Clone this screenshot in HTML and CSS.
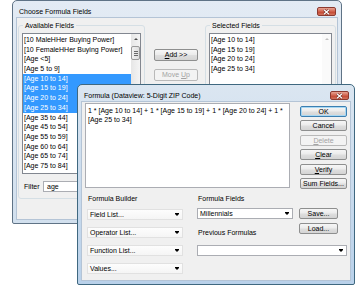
FILE: index.html
```html
<!DOCTYPE html>
<html lang="en">
<head>
    <meta charset="UTF-8">
    <title>Choose Formula Fields</title>
    <link rel="stylesheet" href="styles.css">
</head>
<body>
    <div class="desktop">
        <!-- back dialog -->
        <div class="window fields-window">
            <div class="titlebar">
                <span class="title">Choose Formula Fields</span>
                <span class="close-btn">
                    <svg width="9" height="6" viewBox="0 0 9 6"><path d="M2 0.8 L7 5.2 M7 0.8 L2 5.2" stroke="#6b2a22" stroke-width="2.4"/><path d="M2 0.8 L7 5.2 M7 0.8 L2 5.2" stroke="#fff" stroke-width="1.3"/></svg>
                </span>
            </div>
            <div class="client fields-client">
                <div class="group avail-group">
                    <span class="group-label">Available Fields</span>
                    <div class="listbox avail-list">
                        <div class="items">
                            <div class="item">[10 MaleHHer Buying Power]</div>
                            <div class="item">[10 FemaleHHer Buying Power]</div>
                            <div class="item">[Age &lt;5]</div>
                            <div class="item">[Age 5 to 9]</div>
                            <div class="item selected">[Age 10 to 14]</div>
                            <div class="item selected">[Age 15 to 19]</div>
                            <div class="item selected">[Age 20 to 24]</div>
                            <div class="item selected">[Age 25 to 34]</div>
                            <div class="item">[Age 35 to 44]</div>
                            <div class="item">[Age 45 to 54]</div>
                            <div class="item">[Age 55 to 59]</div>
                            <div class="item">[Age 60 to 64]</div>
                            <div class="item">[Age 65 to 74]</div>
                            <div class="item">[Age 75 to 84]</div>
                            <div class="item">[Age 85+]</div>
                        </div>
                        <div class="vscroll">
                            <div class="arrow-btn"><span class="arrow-up"></span></div>
                            <div class="thumb"><span class="grip"></span></div>
                        </div>
                    </div>
                    <div class="filter-row">
                        <span class="filter-label">Filter</span>
                        <div class="textbox filter-box">age</div>
                    </div>
                </div>

                <div class="move-buttons">
                    <button class="btn"><u>A</u>dd &gt;&gt;</button>
                    <button class="btn" disabled>Move <u>U</u>p</button>
                </div>

                <div class="group sel-group">
                    <span class="group-label">Selected Fields</span>
                    <div class="listbox sel-list">
                        <div class="items">
                            <div class="item">[Age 10 to 14]</div>
                            <div class="item">[Age 15 to 19]</div>
                            <div class="item">[Age 20 to 24]</div>
                            <div class="item">[Age 25 to 34]</div>
                        </div>
                        <div class="vscroll off">
                            <div class="arrow-btn"><span class="arrow-up"></span></div>
                        </div>
                    </div>
                </div>
            </div>
        </div>

        <!-- front dialog -->
        <div class="window formula-window">
            <div class="titlebar">
                <span class="title">Formula (Dataview: 5-Digit ZIP Code)</span>
                <span class="close-btn">
                    <svg width="9" height="6" viewBox="0 0 9 6"><path d="M2 0.8 L7 5.2 M7 0.8 L2 5.2" stroke="#6b2a22" stroke-width="2.4"/><path d="M2 0.8 L7 5.2 M7 0.8 L2 5.2" stroke="#fff" stroke-width="1.3"/></svg>
                </span>
            </div>
            <div class="client formula-client">
                <div class="top-row">
                    <div class="textbox formula-text">1 * [Age 10 to 14] + 1 * [Age 15 to 19] + 1 * [Age 20 to 24] + 1 *<br>[Age 25 to 34]</div>
                    <div class="side-buttons">
                        <button class="btn default">OK</button>
                        <button class="btn">Cancel</button>
                        <button class="btn" disabled><u>D</u>elete</button>
                        <button class="btn"><u>C</u>lear</button>
                        <button class="btn"><u>V</u>erify</button>
                        <button class="btn">Sum Fields...</button>
                    </div>
                </div>

                <div class="bottom-row">
                    <div class="builder-col">
                        <div class="label">Formula Builder</div>
                        <div class="combo flat">Field List...<span class="drop"></span></div>
                        <div class="combo flat">Operator List...<span class="drop"></span></div>
                        <div class="combo flat">Function List...<span class="drop"></span></div>
                        <div class="combo flat">Values...<span class="drop"></span></div>
                    </div>
                    <div class="fields-col">
                        <div class="label">Formula Fields</div>
                        <div class="ff-row">
                            <div class="ff-left">
                                <div class="combo boxed">Millennials<span class="drop"></span></div>
                                <div class="label prev-label">Previous Formulas</div>
                            </div>
                            <div class="ff-right">
                                <button class="btn small">Save...</button>
                                <button class="btn small">Load...</button>
                            </div>
                        </div>
                        <div class="combo boxed wide"><span class="drop"></span></div>
                    </div>
                </div>
            </div>
        </div>
    </div>
</body>
</html>
```

FILE: styles.css
```css
* {
    box-sizing: border-box;
}

body {
    margin: 0;
    background-color: #ffffff;
    font-family: "Liberation Sans", Arial, sans-serif;
    font-size: 7px;
    color: #000;
}

.desktop {
    position: relative;
    width: 356px;
    height: 293px;
    overflow: hidden;
}

/* window chrome (Win7 basic look) */
.window {
    position: absolute;
    display: flex;
    flex-direction: column;
    padding: 0 4px 4px;
    border: 1px solid #5f7386;
    border-radius: 5px 5px 2px 2px;
    background: linear-gradient(#e3ebf4, #d2e0ee);
}

.fields-window {
    left: 12px;
    top: 0;
    width: 330px;
    height: 224px;
}

.formula-window {
    left: 77px;
    top: 84px;
    width: 278px;
    height: 201px;
    border-color: #3f6880;
    background: linear-gradient(#dbe6f1, #b9d1ea);
}

.titlebar {
    height: 17px;
    display: flex;
    align-items: flex-start;
    justify-content: space-between;
    padding-top: 5.5px;
}

.title {
    margin-left: 2px;
    line-height: 9px;
}

.close-btn {
    width: 19px;
    height: 9px;
    margin-top: 0.5px;
    margin-right: 1px;
    display: flex;
    align-items: center;
    justify-content: center;
    border: 1px solid #8c3a30;
    border-radius: 2px;
    background: linear-gradient(#e8a493, #d0614c 50%, #c2442f 51%, #d2735c);
}

.client {
    flex: 1;
    background-color: #f0f0f0;
    box-shadow: 0 0 0 1px #b4c4d6;
}

/* back dialog */
.fields-client {
    display: flex;
    align-items: flex-start;
    padding-left: 1px;
}

.group {
    margin-top: 7px;
    border: 1px solid #d5dfe5;
    border-radius: 3px;
    padding: 0 3px 6px;
}

.group-label {
    display: block;
    width: max-content;
    height: 9px;
    line-height: 9px;
    margin: -5px 0 3px 1px;
    padding: 0 2px;
    background-color: #f0f0f0;
}

.avail-group {
    width: 127px;
}

.sel-group {
    width: 131px;
    margin-left: 7px;
}

.listbox {
    display: flex;
    height: 141px;
    border: 1px solid #828790;
    background-color: #fff;
}

.items {
    flex: 1;
    padding-top: 1px;
    overflow: hidden;
}

.item {
    height: 9.7px;
    line-height: 9.7px;
    padding-left: 1px;
    white-space: nowrap;
}

.item.selected {
    background-color: #3399ff;
    color: #fff;
}

.vscroll {
    width: 9px;
    display: flex;
    flex-direction: column;
    background: linear-gradient(to right, #e6e6e6, #f4f4f4);
}

.vscroll.off {
    background: #fafafa;
}

.arrow-btn {
    height: 9px;
    display: flex;
    align-items: center;
    justify-content: center;
}

.arrow-up {
    width: 0;
    height: 0;
    border-left: 2px solid transparent;
    border-right: 2px solid transparent;
    border-bottom: 2px solid #4d4d4d;
}

.vscroll.off .arrow-up {
    border-bottom-color: #bfbfbf;
}

.thumb {
    height: 14px;
    margin-top: 3px;
    display: flex;
    align-items: center;
    justify-content: center;
    border: 1px solid #9a9a9a;
    border-radius: 2px;
    background: linear-gradient(to right, #f2f2f2, #dedede);
}

.grip {
    width: 4px;
    height: 5px;
    background: repeating-linear-gradient(#6a6a6a 0 1px, transparent 1px 2px);
}

.filter-row {
    display: flex;
    align-items: center;
    margin-top: 6.5px;
    height: 11px;
}

.filter-label {
    margin-left: 2px;
    width: 19px;
}

.textbox {
    border: 1px solid #abadb3;
    background-color: #fff;
}

.filter-box {
    flex: 1;
    height: 11px;
    line-height: 9px;
    padding-left: 3px;
}

.move-buttons {
    display: flex;
    flex-direction: column;
    gap: 8px;
    width: 44px;
    margin: 31px 0 0 9px;
}

/* buttons */
.btn {
    font: inherit;
    height: 12px;
    padding: 0;
    line-height: 10px;
    text-align: center;
    color: #000;
    border: 1px solid #8e8f8f;
    border-radius: 2px;
    background: linear-gradient(#f6f6f6, #ececec 45%, #dedede 55%, #d4d4d4);
}

.btn:disabled {
    color: #a3a3a3;
    border-color: #b9b9b9;
    background: #f3f3f3;
}

.btn.default {
    border-color: #3c7fb1;
    box-shadow: inset 0 0 0 1px #a8d8f3;
}

/* front dialog */
.formula-client {
    display: flex;
    flex-direction: column;
    padding: 1px 3px 0 3px;
}

.top-row {
    display: flex;
    align-items: flex-start;
}

.formula-text {
    width: 205px;
    height: 85px;
    padding: 1.5px 2px;
    line-height: 9.3px;
}

.side-buttons {
    display: flex;
    flex-direction: column;
    gap: 3.4px;
    width: 47px;
    margin: 3px 0 0 10px;
}

.side-buttons .btn {
    height: 11px;
    line-height: 9px;
}

.bottom-row {
    display: flex;
    margin-top: 5.5px;
}

.label {
    height: 9px;
    line-height: 9px;
    margin-left: 1px;
}

.builder-col {
    width: 98px;
    display: flex;
    flex-direction: column;
    gap: 7px;
}

.builder-col .label {
    margin: 0 0 -1.5px 3px;
}

.combo {
    position: relative;
    height: 11px;
    line-height: 9px;
    padding-left: 2px;
    white-space: nowrap;
}

.combo.flat {
    margin-left: 2px;
    border: 1px solid #e1e1e1;
    background: linear-gradient(#fdfdfd, #f5f5f5);
}

.combo.boxed {
    border: 1px solid #abadb3;
    background-color: #fff;
}

.drop {
    position: absolute;
    right: 3px;
    top: 4px;
    width: 0;
    height: 0;
    border-left: 2px solid transparent;
    border-right: 2px solid transparent;
    border-top: 2px solid #000;
}

.drop::before {
    content: '';
    position: absolute;
    left: -2px;
    top: -3px;
    width: 4px;
    height: 1px;
    background: #000;
}

.fields-col {
    margin-left: 14px;
    display: flex;
    flex-direction: column;
}

.ff-row {
    display: flex;
    align-items: flex-start;
    margin-top: 4.5px;
}

.ff-left {
    width: 96px;
}

.prev-label {
    margin-top: 9.5px;
}

.ff-right {
    display: flex;
    flex-direction: column;
    gap: 4px;
    margin-left: 6px;
}

.btn.small {
    width: 39px;
    height: 11px;
    line-height: 9px;
}

.combo.wide {
    width: 150px;
    margin-top: 7.5px;
}
```
